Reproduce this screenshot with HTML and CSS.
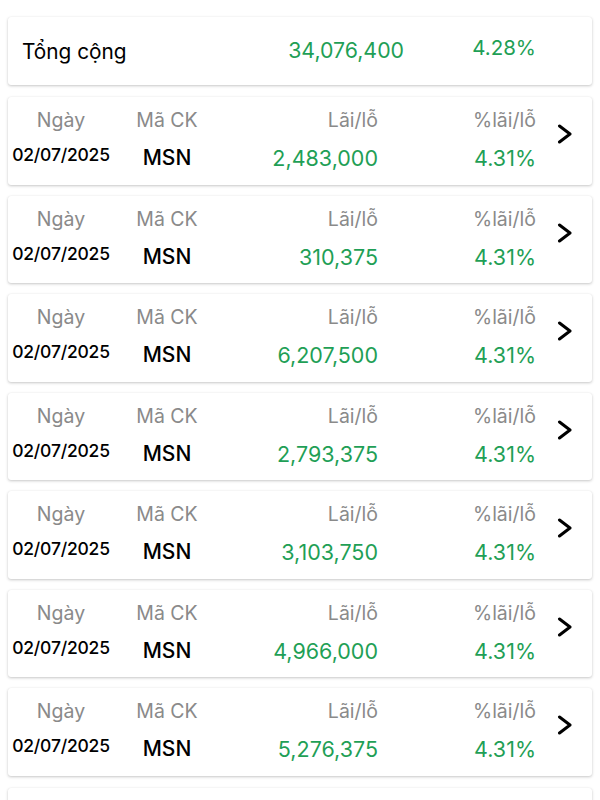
FILE: index.html
```html
<!DOCTYPE html>
<html lang="vi">
<head>
<meta charset="utf-8">
<title>Lãi/lỗ</title>
<link rel="stylesheet" href="styles.css">
</head>
<body>
<div class="list">
  <div class="card total">
    <div class="total-label">Tổng cộng</div>
    <div class="total-value">34,076,400</div>
    <div class="total-pct">4.28%</div>
  </div>

  <div class="card row">
    <div class="lbl c1">Ngày</div><div class="lbl c2">Mã CK</div><div class="lbl c3">Lãi/lỗ</div><div class="lbl c4">%lãi/lỗ</div>
    <div class="chev"><svg viewBox="0 0 16 20" width="16" height="20"><polyline points="2.5,2 13,10 2.5,18"/></svg></div>
    <div class="date c1">02/07/2025</div><div class="code c2">MSN</div><div class="num c3">2,483,000</div><div class="num c4">4.31%</div>
  </div>

  <div class="card row">
    <div class="lbl c1">Ngày</div><div class="lbl c2">Mã CK</div><div class="lbl c3">Lãi/lỗ</div><div class="lbl c4">%lãi/lỗ</div>
    <div class="chev"><svg viewBox="0 0 16 20" width="16" height="20"><polyline points="2.5,2 13,10 2.5,18"/></svg></div>
    <div class="date c1">02/07/2025</div><div class="code c2">MSN</div><div class="num c3">310,375</div><div class="num c4">4.31%</div>
  </div>

  <div class="card row">
    <div class="lbl c1">Ngày</div><div class="lbl c2">Mã CK</div><div class="lbl c3">Lãi/lỗ</div><div class="lbl c4">%lãi/lỗ</div>
    <div class="chev"><svg viewBox="0 0 16 20" width="16" height="20"><polyline points="2.5,2 13,10 2.5,18"/></svg></div>
    <div class="date c1">02/07/2025</div><div class="code c2">MSN</div><div class="num c3">6,207,500</div><div class="num c4">4.31%</div>
  </div>

  <div class="card row">
    <div class="lbl c1">Ngày</div><div class="lbl c2">Mã CK</div><div class="lbl c3">Lãi/lỗ</div><div class="lbl c4">%lãi/lỗ</div>
    <div class="chev"><svg viewBox="0 0 16 20" width="16" height="20"><polyline points="2.5,2 13,10 2.5,18"/></svg></div>
    <div class="date c1">02/07/2025</div><div class="code c2">MSN</div><div class="num c3">2,793,375</div><div class="num c4">4.31%</div>
  </div>

  <div class="card row">
    <div class="lbl c1">Ngày</div><div class="lbl c2">Mã CK</div><div class="lbl c3">Lãi/lỗ</div><div class="lbl c4">%lãi/lỗ</div>
    <div class="chev"><svg viewBox="0 0 16 20" width="16" height="20"><polyline points="2.5,2 13,10 2.5,18"/></svg></div>
    <div class="date c1">02/07/2025</div><div class="code c2">MSN</div><div class="num c3">3,103,750</div><div class="num c4">4.31%</div>
  </div>

  <div class="card row">
    <div class="lbl c1">Ngày</div><div class="lbl c2">Mã CK</div><div class="lbl c3">Lãi/lỗ</div><div class="lbl c4">%lãi/lỗ</div>
    <div class="chev"><svg viewBox="0 0 16 20" width="16" height="20"><polyline points="2.5,2 13,10 2.5,18"/></svg></div>
    <div class="date c1">02/07/2025</div><div class="code c2">MSN</div><div class="num c3">4,966,000</div><div class="num c4">4.31%</div>
  </div>

  <div class="card row">
    <div class="lbl c1">Ngày</div><div class="lbl c2">Mã CK</div><div class="lbl c3">Lãi/lỗ</div><div class="lbl c4">%lãi/lỗ</div>
    <div class="chev"><svg viewBox="0 0 16 20" width="16" height="20"><polyline points="2.5,2 13,10 2.5,18"/></svg></div>
    <div class="date c1">02/07/2025</div><div class="code c2">MSN</div><div class="num c3">5,276,375</div><div class="num c4">4.31%</div>
  </div>

  <div class="card row next"></div>
</div>
</body>
</html>
```

FILE: styles.css
```css
html, body {
  margin: 0;
  padding: 0;
  background: #ffffff;
}
body {
  font-family: Inter, "Liberation Sans", Arial, sans-serif;
  color: #000;
  height: 800px;
  overflow: hidden;
}
.list {
  padding: 17px 8px 0 8px;
  display: flex;
  flex-direction: column;
}
.card {
  background: #fff;
  border-radius: 3px;
  box-shadow: 0 1px 3px rgba(0, 0, 0, 0.22), 0 0 1px rgba(0, 0, 0, 0.08);
}
.total {
  height: 68px;
  margin-bottom: 12px;
  padding-left: 14px;
  display: grid;
  grid-template-columns: 1fr 154px 132px 56px;
  align-items: center;
}
.total-label {
  font-size: 20.8px;
}
.total-value {
  font-size: 21.3px;
  color: #1f9f56;
  text-align: right;
  margin-top: -2px;
}
.total-pct {
  font-size: 20.5px;
  color: #1f9f56;
  text-align: right;
  margin-top: -7px;
}
.row {
  height: 87.5px;
  box-sizing: border-box;
  margin-bottom: 11px;
  padding: 10px 0 0 4px;
  display: grid;
  grid-template-columns: 98px 114px 154px 158px 1fr;
  grid-template-rows: 26px 28px;
  row-gap: 11px;
}
.row.next {
  margin-top: 1.5px;
}
.c1 { grid-column: 1; text-align: center; }
.c2 { grid-column: 2; text-align: center; }
.c3 { grid-column: 3; text-align: right; }
.c4 { grid-column: 4; text-align: right; }
.lbl {
  grid-row: 1;
  font-size: 19.5px;
  line-height: 26px;
  color: #8a8a8a;
}
.date, .code, .num {
  grid-row: 2;
  line-height: 28px;
}
.date {
  font-size: 17.5px;
  font-weight: 500;
  margin-top: -3px;
  letter-spacing: -0.2px;
}
.code {
  font-size: 21px;
  font-weight: 500;
}
.num {
  font-size: 21.5px;
  color: #1f9f56;
}
.chev {
  grid-column: 5;
  grid-row: 1 / 3;
  margin: 17px 0 0 21px;
  width: 16px;
  height: 20px;
}
.chev svg {
  display: block;
}
.chev polyline {
  fill: none;
  stroke: #000;
  stroke-width: 3;
  stroke-linecap: round;
  stroke-linejoin: round;
}
```
